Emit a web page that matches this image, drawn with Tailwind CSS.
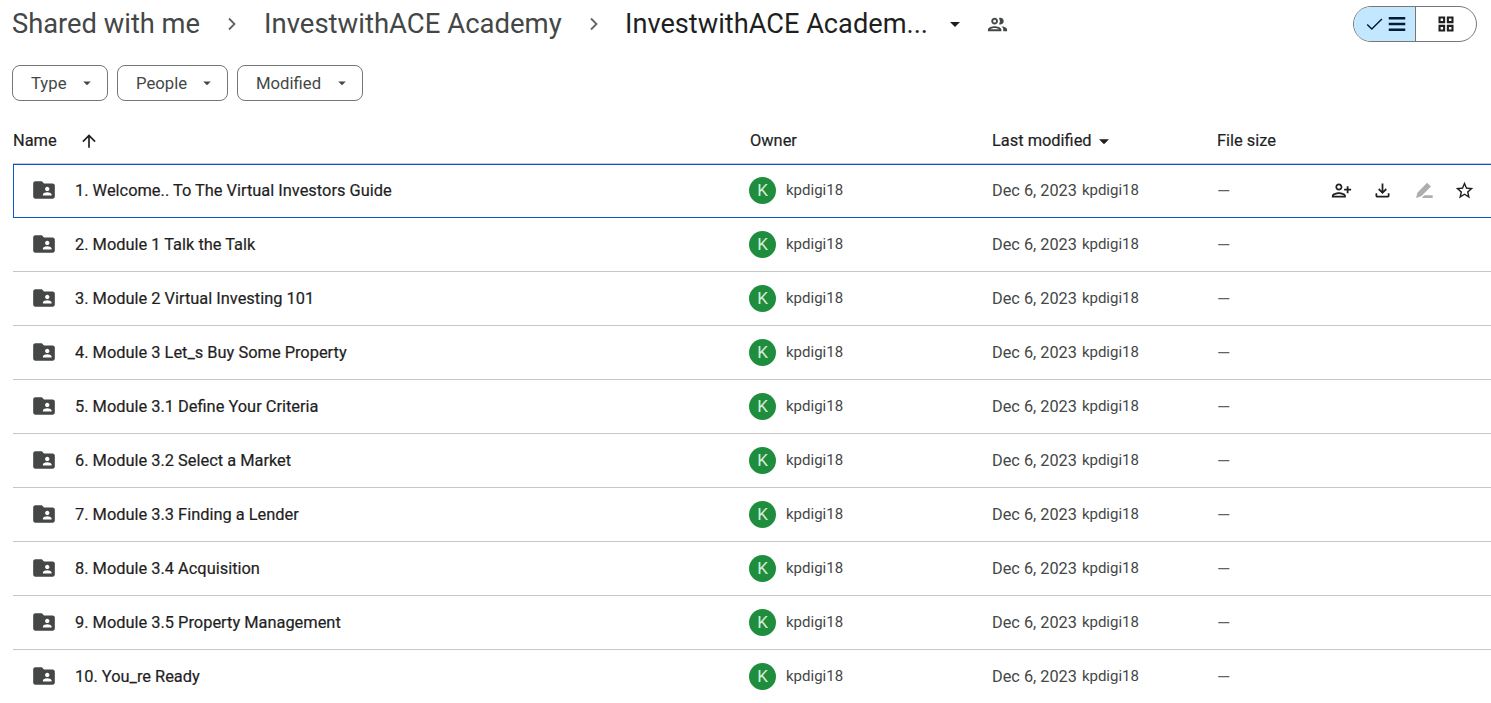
<!DOCTYPE html>
<html lang="en">
  <head>
    <meta charset="UTF-8" />
    <meta name="viewport" content="width=device-width, initial-scale=1.0" />
    <title>InvestwithACE Academy - Google Drive</title>
    <script src="https://cdn.jsdelivr.net/npm/@tailwindcss/browser@4"></script>
  </head>
  <body class="bg-white h-[703px] overflow-hidden font-['Roboto',sans-serif] text-[#1f1f1f]">
    <!-- breadcrumb -->
    <div class="flex items-center h-12 pl-3 pr-[14px]">
      <span class="text-[27.3px] text-[#444746] w-[188px] whitespace-nowrap">Shared with me</span>
      <svg class="w-6 h-6 ml-[20px] text-[#5f6368]" viewBox="0 0 24 24" fill="none" stroke="currentColor" stroke-width="1.8"><path d="M9 6.5l5.5 5.5L9 17.5" /></svg>
      <span class="text-[27.5px] text-[#444746] ml-5 w-[298px] whitespace-nowrap">InvestwithACE Academy</span>
      <svg class="w-6 h-6 ml-5 text-[#5f6368]" viewBox="0 0 24 24" fill="none" stroke="currentColor" stroke-width="1.8"><path d="M9 6.5l5.5 5.5L9 17.5" /></svg>
      <span class="text-[27.2px] ml-[19px] w-[302px] whitespace-nowrap">InvestwithACE Academ...</span>
      <svg class="w-6 h-6 ml-4 text-[#1f1f1f]" viewBox="0 0 24 24" fill="currentColor"><path d="M7 10l5 5 5-5z" /></svg>
      <svg class="w-[23px] h-[23px] ml-[19px] text-[#444746]" viewBox="0 0 24 24" fill="currentColor"><path d="M9 13.75c-2.34 0-7 1.17-7 3.5V19h14v-1.75c0-2.33-4.66-3.5-7-3.5zM4.34 17c.84-.58 2.87-1.25 4.66-1.25s3.82.67 4.66 1.25H4.34zM9 12c1.93 0 3.5-1.57 3.5-3.5S10.93 5 9 5 5.5 6.57 5.5 8.5 7.07 12 9 12zm0-5c.83 0 1.5.67 1.5 1.5S9.83 10 9 10s-1.5-.67-1.5-1.5S8.17 7 9 7zm7.04 6.81c1.16.84 1.96 1.96 1.96 3.44V19h4v-1.75c0-2.02-3.5-3.17-5.96-3.44zM15 12c1.93 0 3.5-1.57 3.5-3.5S16.93 5 15 5c-.54 0-1.04.13-1.5.35.63.89 1 1.98 1 3.15s-.37 2.26-1 3.15c.46.22.96.35 1.5.35z" /></svg>
      <div class="ml-auto flex h-9 w-[124px] border border-[#747775] rounded-full overflow-hidden">
        <div class="w-[62px] bg-[#c2e7ff] border-r border-[#747775] flex items-center justify-center text-[#001d35] pl-[2px]">
          <svg class="w-[22px] h-[22px]" viewBox="0 0 24 24" fill="none" stroke="currentColor" stroke-width="1.6"><path d="M3.5 12.5l5 5L19.5 6.5" /></svg>
          <svg class="w-[22px] h-[22px]" viewBox="0 0 24 24" fill="currentColor"><path d="M3 4.4h18V7H3zM3 10.7h18v2.6H3zM3 17h18v2.6H3z" /></svg>
        </div>
        <div class="flex-1 flex items-center justify-center text-[#1f1f1f]">
          <svg class="w-5 h-5" viewBox="0 0 24 24" fill="currentColor" fill-rule="evenodd"><path d="M3 3h8v8H3zm2.5 2.5v3h3v-3zM13 3h8v8h-8zm2.5 2.5v3h3v-3zM3 13h8v8H3zm2.5 2.5v3h3v-3zM13 13h8v8h-8zm2.5 2.5v3h3v-3z" /></svg>
        </div>
      </div>
    </div>

    <!-- filters -->
    <div class="flex gap-[9px] pl-3 mt-[17px] text-[#444746] text-[16.7px]">
      <button class="flex items-center justify-between w-[96px] h-9 pl-[18px] pr-[11px] border border-[#747775] rounded-lg"><span class="pt-[2px]">Type</span><svg class="w-[18px] h-[18px]" viewBox="0 0 24 24" fill="currentColor"><path d="M7 10l5 5 5-5z" /></svg></button>
      <button class="flex items-center justify-between w-[111px] h-9 pl-[18px] pr-[11px] border border-[#747775] rounded-lg"><span class="pt-[2px]">People</span><svg class="w-[18px] h-[18px]" viewBox="0 0 24 24" fill="currentColor"><path d="M7 10l5 5 5-5z" /></svg></button>
      <button class="flex items-center justify-between w-[126px] h-9 pl-[18px] pr-[11px] border border-[#747775] rounded-lg"><span class="pt-[2px]">Modified</span><svg class="w-[18px] h-[18px]" viewBox="0 0 24 24" fill="currentColor"><path d="M7 10l5 5 5-5z" /></svg></button>
    </div>

    <!-- column headers -->
    <div class="grid grid-cols-[737px_242px_225px_1fr] items-center h-[48px] pt-[3px] mt-[15px] ml-[13px] text-[16.4px] [-webkit-text-stroke:0.2px] border-b border-[#c7c7c7]">
      <div class="flex items-center">Name<svg class="w-5 h-5 ml-[22px]" viewBox="0 0 24 24" fill="currentColor"><path d="M4 12l1.41 1.41L11 7.83V20h2V7.83l5.58 5.59L20 12l-8-8-8 8z" /></svg></div>
      <div>Owner</div>
      <div class="flex items-center">Last modified<svg class="w-5 h-5 ml-[2px]" viewBox="0 0 24 24" fill="currentColor"><path d="M6 10l6 6 6-6z" /></svg></div>
      <div>File size</div>
    </div>

    <!-- file rows -->
    <div id="rows"></div>

    <script>
      const names = [
        "1. Welcome.. To The Virtual Investors Guide",
        "2. Module 1 Talk the Talk",
        "3. Module 2 Virtual Investing 101",
        "4. Module 3 Let_s Buy Some Property",
        "5. Module 3.1 Define Your Criteria",
        "6. Module 3.2 Select a Market",
        "7. Module 3.3 Finding a Lender",
        "8. Module 3.4 Acquisition",
        "9. Module 3.5 Property Management",
        "10. You_re Ready",
      ];

      const actions = `
        <div class="flex items-center gap-5 ml-auto mr-4">
          <svg class="w-[21px] h-[21px] -scale-x-100 text-[#1f1f1f]" viewBox="0 0 24 24" fill="currentColor"><path d="M15 12c2.21 0 4-1.79 4-4s-1.79-4-4-4-4 1.79-4 4 1.79 4 4 4zm0-6c1.1 0 2 .9 2 2s-.9 2-2 2-2-.9-2-2 .9-2 2-2zm0 8c-2.67 0-8 1.34-8 4v2h16v-2c0-2.66-5.33-4-8-4zm-6 4c.22-.72 3.31-2 6-2 2.7 0 5.8 1.29 6 2H9zm-3-3v-3h3v-2H6V7H4v3H1v2h3v3h2z" /></svg>
          <svg class="w-[21px] h-[21px] text-[#1f1f1f]" viewBox="0 0 24 24" fill="currentColor"><path d="M12 16l-5-5 1.4-1.45 2.6 2.6V4h2v8.15l2.6-2.6L17 11l-5 5zm-6 4c-.55 0-1.02-.196-1.41-.59A1.93 1.93 0 014 18v-3h2v3h12v-3h2v3c0 .55-.196 1.02-.59 1.41-.39.39-.86.59-1.41.59H6z" /></svg>
          <svg class="w-[21px] h-[21px] text-[#aeaeae]" viewBox="0 0 24 24" fill="currentColor"><path d="M16 3l4.5 4.5L9.5 18.5 3.5 20.5 5 14.5 16 3z" /><path d="M13 17.5h9.5V20.5H10z" /></svg>
          <svg class="w-[21px] h-[21px] text-[#1f1f1f]" viewBox="0 0 24 24" fill="currentColor"><path d="M22 9.24l-7.19-.62L12 2 9.19 8.63 2 9.24l5.46 4.73L5.82 21 12 17.27 18.18 21l-1.63-7.03L22 9.24zM12 15.4l-3.76 2.27 1-4.28-3.32-2.88 4.38-.38L12 6.1l1.71 4.04 4.38.38-3.32 2.88 1 4.28L12 15.4z" /></svg>
        </div>`;

      document.getElementById("rows").innerHTML = names
        .map((name, i) => {
          const rowClass = i === 0
            ? "border-b border-[#0b57d0] shadow-[inset_0_1px_0_#0b57d0,inset_1px_0_0_#0b57d0]"
            : "border-b border-[#c7c7c7]";
          return `
          <div class="ml-[13px] h-[54px] grid grid-cols-[737px_242px_225px_1fr] items-center ${rowClass}">
            <div class="flex items-center text-[16.4px]">
              <svg class="w-[26px] h-[26px] ml-[18px] text-[#444746]" viewBox="0 0 24 24" fill="currentColor"><path d="M20 6h-8l-2-2H4c-1.1 0-1.99.9-1.99 2L2 18c0 1.1.9 2 2 2h16c1.1 0 2-.9 2-2V8c0-1.1-.9-2-2-2zm-5 3c1.1 0 2 .9 2 2s-.9 2-2 2-2-.9-2-2 .9-2 2-2zm4 8h-8v-1c0-1.33 2.67-2 4-2s4 .67 4 2v1z" /></svg>
              <span class="ml-[18px] pt-[2px] [-webkit-text-stroke:0.2px]">${name}</span>
            </div>
            <div class="flex items-center text-[15px] text-[#444746]">
              <span class="w-[27px] h-[27px] rounded-full bg-[#1e8e3e] text-[#d6ecd9] text-[17px] flex items-center justify-center -ml-px">K</span>
              <span class="ml-[10px]">kpdigi18</span>
            </div>
            <div class="flex items-center text-[#444746] whitespace-nowrap"><span class="text-[16.3px] pt-[2px]">Dec 6, 2023</span><span class="text-[15px] ml-[5px]">kpdigi18</span></div>
            <div class="flex items-center text-[#5f6368]"><span class="text-[17px] pt-[2px]">—</span>${i === 0 ? actions : ""}</div>
          </div>`;
        })
        .join("");
    </script>
  </body>
</html>
